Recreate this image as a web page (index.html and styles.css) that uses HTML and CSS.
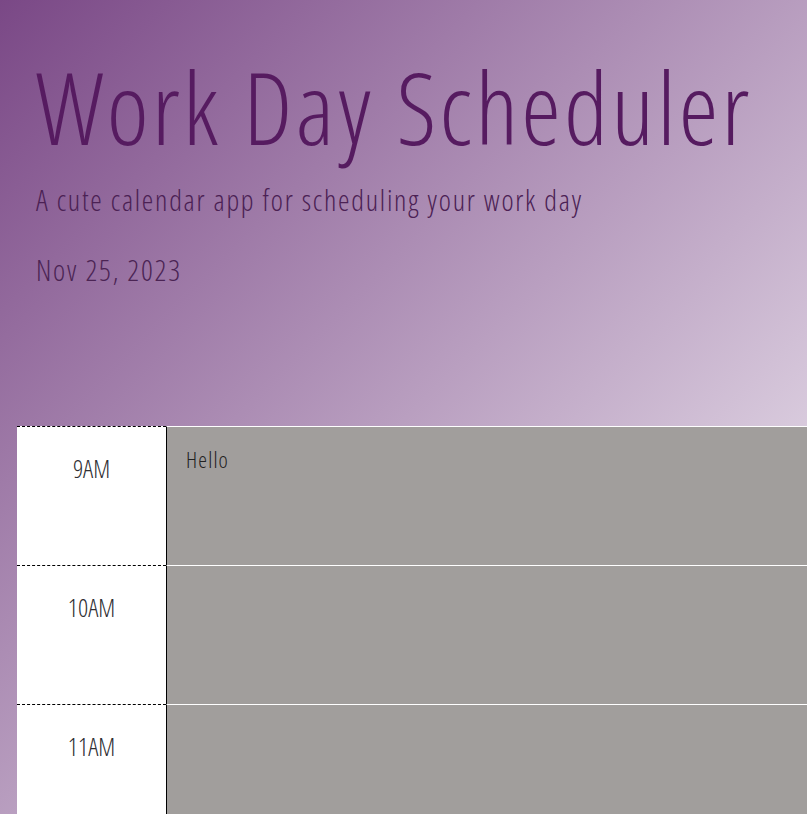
FILE: index.html
```html
<!DOCTYPE html>
<html lang="en">
<head>
<meta charset="utf-8">
<title>Work Day Scheduler</title>
<link rel="stylesheet" href="styles.css">
</head>
<body>
<header class="jumbotron">
  <h1 class="title">Work Day Scheduler</h1>
  <p class="lead">A cute calendar app for scheduling your work day</p>
  <p class="current-day">Nov 25, 2023</p>
</header>
<main class="schedule">
  <div class="time-block">
    <div class="hour">9AM</div>
    <textarea class="description">Hello</textarea>
  </div>
  <div class="time-block">
    <div class="hour">10AM</div>
    <textarea class="description"></textarea>
  </div>
  <div class="time-block">
    <div class="hour">11AM</div>
    <textarea class="description"></textarea>
  </div>
  <div class="time-block">
    <div class="hour">12PM</div>
    <textarea class="description"></textarea>
  </div>
</main>
</body>
</html>
```
FILE: styles.css
```css
html, body {
  margin: 0;
  padding: 0;
}
body {
  min-height: 100vh;
  overflow-x: hidden;
  background: linear-gradient(to bottom right, #7a4886, #f6f3f8) fixed;
  font-family: "Open Sans", "DejaVu Sans", sans-serif;
  font-stretch: condensed;
  font-weight: 300;
}
.jumbotron {
  padding: 56px 0 0 36px;
  display: flex;
  flex-direction: column;
}
.title {
  margin: 0;
  font-size: 100px;
  line-height: 100px;
  font-weight: 300;
  letter-spacing: 3.3px;
  color: #561b60;
  white-space: nowrap;
}
.lead {
  margin: 24px 0 0;
  font-size: 29px;
  line-height: 40px;
  letter-spacing: 1.75px;
  color: #4b2154;
  white-space: nowrap;
}
.current-day {
  margin: 30px 0 0;
  font-size: 29px;
  line-height: 40px;
  letter-spacing: 1.8px;
  color: #4b2454;
}
.schedule {
  margin: 136px 0 0 17px;
  width: 1000px;
}
.time-block {
  display: flex;
  height: 139px;
}
.hour {
  width: 149px;
  flex: none;
  box-sizing: border-box;
  border-top: 1px dashed #000;
  background: #fff;
  text-align: center;
  padding-top: 26px;
  font-size: 25px;
  line-height: 30px;
  color: #2f2f33;
}
.description {
  flex: 1;
  margin: 0;
  box-sizing: border-box;
  border: none;
  border-top: 1px solid #fff;
  border-left: 1px solid #000;
  border-radius: 0;
  background: #a19e9c;
  padding: 18px 19px;
  font-family: "Open Sans", "DejaVu Sans", sans-serif;
  font-stretch: condensed;
  font-weight: 300;
  font-size: 22px;
  line-height: 28px;
  letter-spacing: 1.2px;
  color: #222;
  resize: none;
  outline: none;
}
```
